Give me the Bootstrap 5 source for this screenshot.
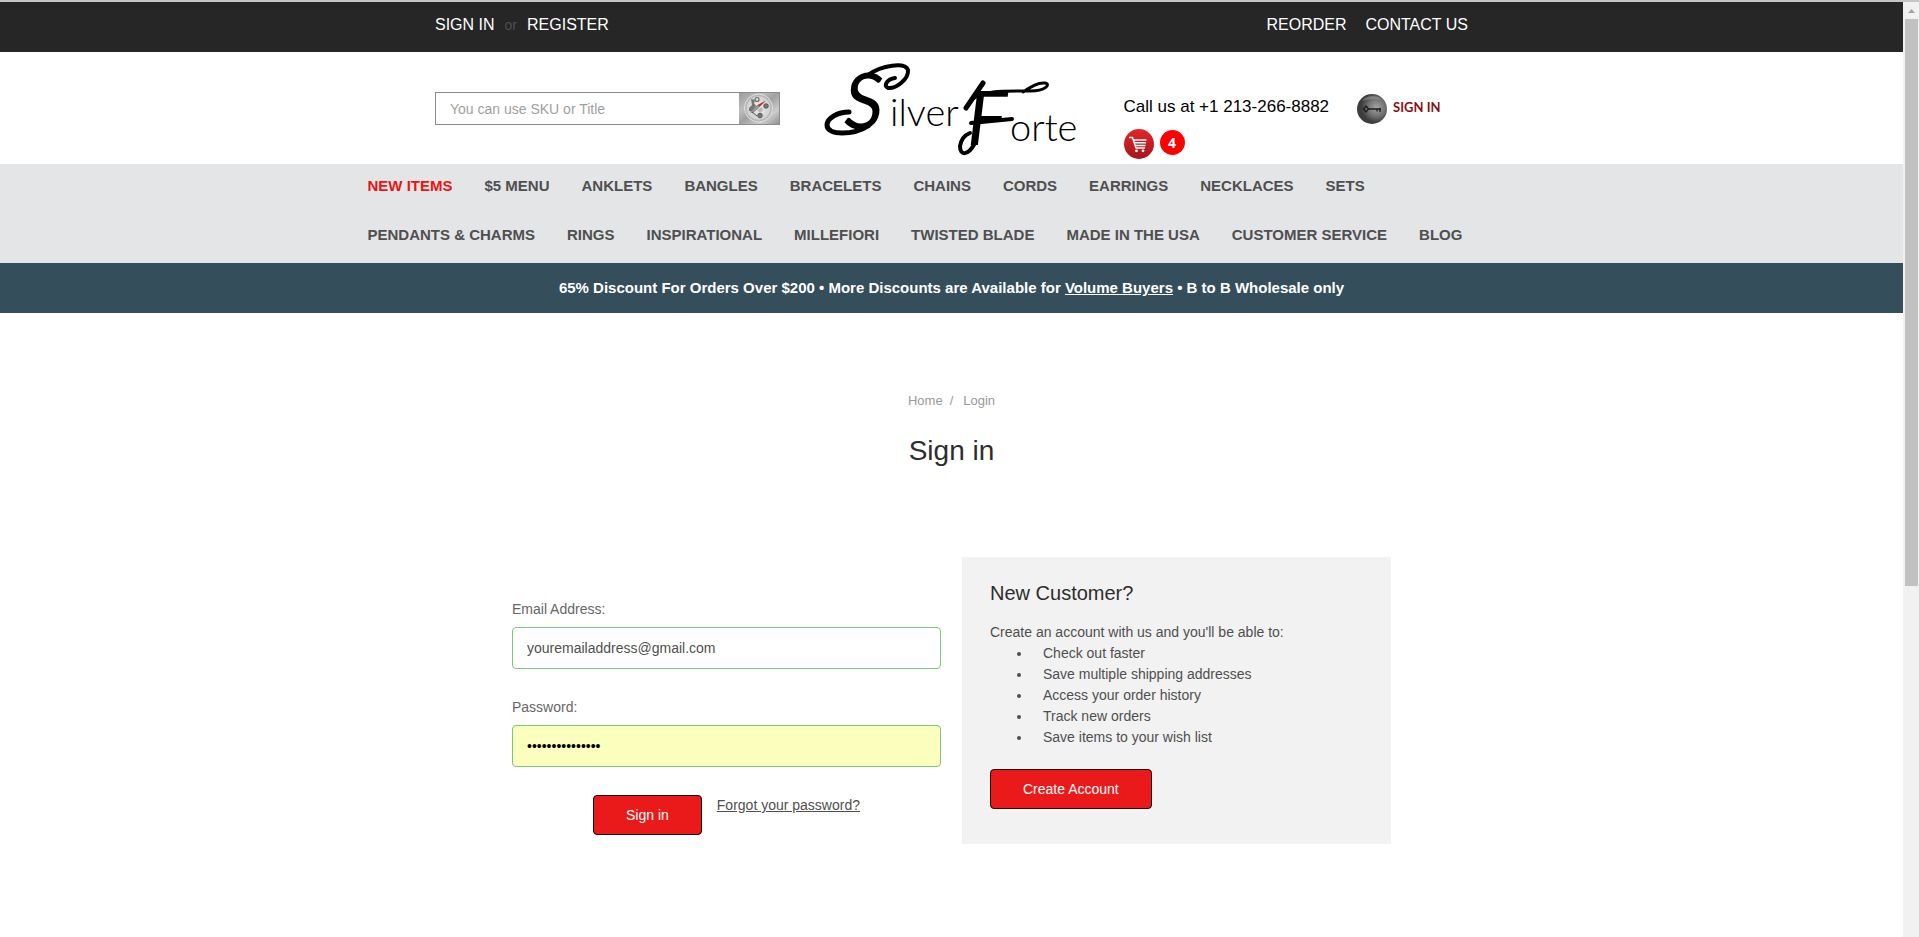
<!DOCTYPE html>
<html lang="en">
<head>
<meta charset="utf-8">
<meta name="viewport" content="width=device-width, initial-scale=1">
<title>Silver Forte - Sign in</title>
<link href="https://cdn.jsdelivr.net/npm/bootstrap@5.3.0/dist/css/bootstrap.min.css" rel="stylesheet">
<style>
  body { font-family: "Liberation Sans", Arial, sans-serif; font-size: 14px; line-height: 21px; color: #4f4f4f; background: #fff; }
  .window { min-height: 100vh; border-top: 2px solid #c4c6c8; }
  .shell { width: 100%; max-width: 1033px; margin: 0 auto; }
  .topbar { background: #262626; min-height: 50px; padding-top: 11px; font-size: 16px; line-height: 24px; color: #4f4f4f; }
  .topbar a { color: #fff; text-decoration: none; }
  .topbar .or-word { font-size: 14px; padding: 0 10px; }
  .topbar .right-links { gap: 19px; }
  .masthead { min-height: 112px; }
  .head-grid { display: grid; grid-template-columns: 345fr 256px 345fr; column-gap: 44px; }
  .search-box { height: 33px; margin-top: 40px; border: 1px solid #8c8c8c; }
  .search-box input { border: 0; border-radius: 0; padding: 2px 14px 0; font-size: 14px; color: #333; box-shadow: none; }
  .search-box input::placeholder { color: #a0a0a0; opacity: 1; }
  .search-box button { border: 0; padding: 0; width: 40px; background: none; line-height: 0; }
  .logo-art { overflow: visible; }
  .contact { margin-top: 42px; color: #000; font-size: 17px; line-height: 26px; white-space: nowrap; }
  .contact .first-line { gap: 28px; }
  .contact .sign-link { font-family: Lato, sans-serif; font-size: 13px; font-weight: 700; color: #8b0f12; text-decoration: none; margin-left: 6px; }
  .contact .second-line { gap: 6px; margin-top: 5px; }
  .cart-count { width: 25px; height: 25px; border-radius: 50%; background: #f00; color: #fff; font: 700 14px/25px "Open Sans", sans-serif; text-align: center; margin-top: 1px; }
  .mainnav { background: #e3e5e6; padding: 10px 0 16px; }
  .mainnav ul { width: 100%; max-width: 1168px; margin: 0 auto; padding: 0; list-style: none; display: flex; flex-wrap: wrap; column-gap: 32px; row-gap: 25px; }
  .mainnav a { color: #4f4f4f; font-size: 15px; line-height: 24px; font-weight: 700; text-decoration: none; display: block; white-space: nowrap; }
  .mainnav .hot { color: #ec1313; }
  .promo { background: #344e5b; color: #fff; font-size: 15px; font-weight: 700; line-height: 50px; text-align: center; }
  .promo a { color: #fff; }
  .crumbs { font-size: 13px; padding-top: 77px; color: #999; }
  .crumbs a { color: #999; text-decoration: none; }
  .crumbs span { padding: 0 10px 0 7px; }
  .page-title { font-size: 28px; line-height: 42px; font-weight: 400; color: #2d2d2d; margin: 19px 0 0; }
  .login-row { width: 100%; max-width: 879px; margin: 85px auto 0; display: grid; grid-template-columns: 1fr 1fr; column-gap: 21px; }
  .login-form { padding-top: 42px; }
  .login-form label { color: #666; display: block; margin-bottom: 7px; }
  .login-form .form-control { height: 42px; border: 1px solid #7cc77c; border-radius: 4px; padding: 0 14px; font-size: 14px; color: #4f4f4f; }
  .login-form .field + .field { margin-top: 28px; }
  .login-form .form-control.filled { background: #faffbd; color: #000; }
  .btn-red { background: #eb1a1a; border: 1px solid #1f0000; border-radius: 4px; color: #fff; font-size: 14px; line-height: 21px; padding: 9px 32px; height: 40px; }
  .btn-red:hover { background: #c91414; color: #fff; }
  .actions { margin-top: 28px; gap: 15px; }
  .actions a { color: #4f4f4f; }
  .panel-new { background: #f2f2f2; padding: 21px 28px 35px; }
  .panel-new h2 { font-size: 20px; line-height: 30px; font-weight: 400; color: #2d2d2d; margin: 0 0 14px; }
  .panel-new ul { margin: 0 0 21px; padding-left: 42px; }
  .panel-new li { padding-left: 11px; }
  .scrollrail { width: 16px; background: #f1f1f1; padding: 0 1px 0 2px; flex: none; }
  .scrollrail .arrow { height: 17px; line-height: 0; }
  .scrollrail .thumb { background: #c1c1c1; flex: 567 0 0; }
  .scrollrail .rest { flex: 351 0 0; }
</style>
</head>
<body>
<div class="window d-flex">
  <div class="flex-grow-1">
    <div class="topbar">
      <div class="shell d-flex justify-content-between">
        <div class="d-flex"><a href="#">SIGN IN</a><span class="or-word">or</span><a href="#">REGISTER</a></div>
        <div class="d-flex right-links"><a href="#">REORDER</a><a href="#">CONTACT US</a></div>
      </div>
    </div>
    <header class="masthead">
      <div class="shell head-grid">
        <form class="search-box d-flex" role="search">
          <input class="form-control" type="search" placeholder="You can use SKU or Title" aria-label="Search">
          <button type="button" aria-label="Search">
            <svg width="40" height="31" viewBox="0 0 40 31">
              <defs>
                <linearGradient id="steel" x1="0" y1="0" x2="1" y2="1"><stop offset="0" stop-color="#9a9a9a"/><stop offset=".3" stop-color="#bdbdbd"/><stop offset=".5" stop-color="#a0a0a0"/><stop offset=".75" stop-color="#cccccc"/><stop offset="1" stop-color="#929292"/></linearGradient>
                <radialGradient id="dial"><stop offset="0" stop-color="#f0f0f0"/><stop offset=".8" stop-color="#d2d2d2"/><stop offset="1" stop-color="#a5a5a5"/></radialGradient>
              </defs>
              <rect width="40" height="31" fill="url(#steel)"/>
              <circle cx="19.500" cy="15" r="14" fill="url(#dial)" stroke="#e2e2e2"/>
              <circle cx="19.500" cy="15" r="12.500" fill="none" stroke="#b5b5b5" stroke-width=".7"/>
              <circle cx="18" cy="6.500" r="2" fill="none" stroke="#6c6c6c" stroke-width="1.200"/>
              <path d="M12 6l4 1-1 3 2 3-4 5-3 0 0-3 3-3z" fill="#757575"/>
              <circle cx="27" cy="13" r="2.300" fill="#777" stroke="#4d4d4d" stroke-width=".8"/><circle cx="21" cy="22.500" r="2.300" fill="#777" stroke="#4d4d4d" stroke-width=".8"/>
              <path d="M18 17l5-3 1 3-3 3z" fill="#b9b9b9"/>
              <path d="M27 7.500L18.500 12l2 2z" fill="#c8253f"/><path d="M18.500 12l-7 7 2 1 7-6z" fill="#999" stroke="#666" stroke-width=".5"/>
              <path d="M13 19l5 4" stroke="#555"/>
            </svg>
          </button>
        </form>
        <a href="#" class="d-block mt-2 text-decoration-none" aria-label="Silver Forte">
          <svg class="logo-art" width="256" height="100" viewBox="0 -2 256 100" fill="none" stroke="#000" stroke-linecap="round">
            <g fill="#000" stroke="none" font-family="Lato, sans-serif">
              <text x="20" y="67" font-style="italic" font-size="78">S</text>
              <text x="66" y="64" font-weight="300" font-size="38">ilver</text>
              <text x="143" y="83" font-style="italic" font-size="76">F</text>
              <text x="186" y="79" font-weight="300" font-size="38">orte</text>
            </g>
            <path d="M44 13C58 3 81 0 84 8C85 17 72 27 64 26C59 24 63 17 71 16" stroke-width="4"/>
            <path d="M44 64C30 73 3 74 3 63C3 56 14 50 25 50" stroke-width="5"/>
            <path d="M159 21L142 46" stroke-width="5"/>
            <path d="M147 38C160 28 180 29 206 29C222 29 227 22 221 21C214 20 206 25 199 30" stroke-width="3"/>
            <path d="M151 81C144 94 136 94 136 84C137 78 141 73 146 71" stroke-width="4"/>
            <path d="M147 61L188 57" stroke-width="4"/>
          </svg>
        </a>
        <div class="contact">
          <div class="first-line d-flex align-items-start">
            <span>Call us at +1 213-266-8882</span>
            <span class="d-flex">
            <svg width="30" height="30" viewBox="0 0 30 30">
              <defs><radialGradient id="ball" cx=".65" cy=".45"><stop offset="0" stop-color="#a4a4a4"/><stop offset=".6" stop-color="#707070"/><stop offset="1" stop-color="#3d3d3d"/></radialGradient></defs>
              <circle cx="15" cy="15" r="15" fill="url(#ball)"/>
              <path d="M5 7C9 1 20 0 25 6C18 4 11 5 5 7z" fill="#b9b9b9" opacity=".35"/>
              <path d="M9 12l2.500 3L9 18L6.500 15z" fill="none" stroke="#1c1c1c" stroke-width="1.300"/>
              <path d="M11 15h13M20 15v2.500M23 14v4" stroke="#1c1c1c" stroke-width="1.300" fill="none"/>
            </svg>
            <a href="#" class="sign-link">SIGN IN</a>
            </span>
          </div>
          <div class="second-line d-flex align-items-start">
            <a href="#" aria-label="Cart" class="d-block">
              <svg class="d-block" width="30" height="30" viewBox="0 0 30 30">
                <defs><linearGradient id="cart" x2="0" y2="1"><stop offset="0" stop-color="#e3262b"/><stop offset="1" stop-color="#a5151b"/></linearGradient></defs>
                <circle cx="15" cy="15" r="15" fill="url(#cart)"/>
                <path d="M5 8.500h3.500L12 19h9" fill="none" stroke="#fff" stroke-width="1.500"/>
                <path d="M10 11h12.500M11 13.800h11M12 16.600h9.500" stroke="#fff" stroke-width="1.500"/>
                <circle cx="12.500" cy="21.800" r="1.400" fill="#fff"/><circle cx="19" cy="21.800" r="1.400" fill="#fff"/>
              </svg>
            </a>
            <span class="cart-count">4</span>
          </div>
        </div>
      </div>
    </header>
    <nav class="mainnav">
      <ul>
        <li><a href="#" class="hot">NEW ITEMS</a></li>
        <li><a href="#">$5 MENU</a></li>
        <li><a href="#">ANKLETS</a></li>
        <li><a href="#">BANGLES</a></li>
        <li><a href="#">BRACELETS</a></li>
        <li><a href="#">CHAINS</a></li>
        <li><a href="#">CORDS</a></li>
        <li><a href="#">EARRINGS</a></li>
        <li><a href="#">NECKLACES</a></li>
        <li><a href="#">SETS</a></li>
        <li><a href="#">PENDANTS &amp; CHARMS</a></li>
        <li><a href="#">RINGS</a></li>
        <li><a href="#">INSPIRATIONAL</a></li>
        <li><a href="#">MILLEFIORI</a></li>
        <li><a href="#">TWISTED BLADE</a></li>
        <li><a href="#">MADE IN THE USA</a></li>
        <li><a href="#">CUSTOMER SERVICE</a></li>
        <li><a href="#">BLOG</a></li>
      </ul>
    </nav>
    <div class="promo">65% Discount For Orders Over $200 • More Discounts are Available for <a href="#">Volume Buyers</a> • B to B Wholesale only</div>
    <main>
      <div class="crumbs d-flex justify-content-center"><a href="#">Home</a><span>/</span><a href="#">Login</a></div>
      <h1 class="page-title text-center">Sign in</h1>
      <div class="login-row">
        <form class="login-form">
          <div class="field">
            <label for="email">Email Address:</label>
            <input class="form-control" type="email" id="email" value="youremailaddress@gmail.com">
          </div>
          <div class="field">
            <label for="pass">Password:</label>
            <input class="form-control filled" type="password" id="pass" value="silverforte1234">
          </div>
          <div class="actions d-flex justify-content-center align-items-start">
            <button type="button" class="btn btn-red">Sign in</button>
            <a href="#">Forgot your password?</a>
          </div>
        </form>
        <section class="panel-new">
          <h2>New Customer?</h2>
          <p class="m-0">Create an account with us and you'll be able to:</p>
          <ul>
            <li>Check out faster</li>
            <li>Save multiple shipping addresses</li>
            <li>Access your order history</li>
            <li>Track new orders</li>
            <li>Save items to your wish list</li>
          </ul>
          <button type="button" class="btn btn-red">Create Account</button>
        </section>
      </div>
    </main>
  </div>
  <div class="scrollrail d-flex flex-column" aria-hidden="true">
    <div class="arrow"><svg width="13" height="17" viewBox="0 0 13 17"><path d="M3 11L6.500 7L10 11z" fill="#a3a3a3"/></svg></div>
    <div class="thumb"></div>
    <div class="rest"></div>
  </div>
</div>
<script src="https://cdn.jsdelivr.net/npm/bootstrap@5.3.0/dist/js/bootstrap.bundle.min.js"></script>
</body>
</html>
